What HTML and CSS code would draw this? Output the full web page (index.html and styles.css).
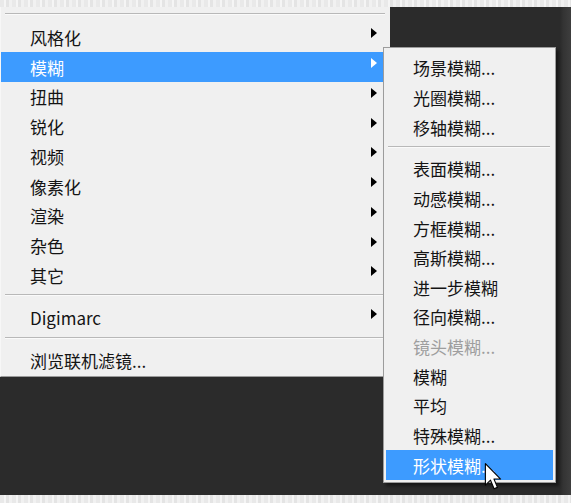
FILE: index.html
```html
<!DOCTYPE html>
<html lang="zh-CN">
<head>
<meta charset="utf-8">
<title>滤镜菜单</title>
<link rel="stylesheet" href="styles.css">
</head>
<body>
<div class="screen">
  <div class="band"></div>
  <div class="workspace">
    <div class="menu-main">
      <div class="sep sep-top"></div>
      <div class="item"><span>风格化</span><i class="arrow"></i></div>
      <div class="item active"><span>模糊</span><i class="arrow"></i></div>
      <div class="item"><span>扭曲</span><i class="arrow"></i></div>
      <div class="item"><span>锐化</span><i class="arrow"></i></div>
      <div class="item"><span>视频</span><i class="arrow"></i></div>
      <div class="item"><span>像素化</span><i class="arrow"></i></div>
      <div class="item"><span>渲染</span><i class="arrow"></i></div>
      <div class="item"><span>杂色</span><i class="arrow"></i></div>
      <div class="item"><span>其它</span><i class="arrow"></i></div>
      <div class="sep sep-a"></div>
      <div class="item"><span>Digimarc</span><i class="arrow"></i></div>
      <div class="sep sep-b"></div>
      <div class="item"><span>浏览联机滤镜...</span></div>
    </div>
    <div class="menu-sub">
      <div class="sitem tall">场景模糊...</div>
      <div class="sitem tall">光圈模糊...</div>
      <div class="sitem tall">移轴模糊...</div>
      <div class="ssep"></div>
      <div class="sitem">表面模糊...</div>
      <div class="sitem">动感模糊...</div>
      <div class="sitem">方框模糊...</div>
      <div class="sitem">高斯模糊...</div>
      <div class="sitem">进一步模糊</div>
      <div class="sitem">径向模糊...</div>
      <div class="sitem disabled">镜头模糊...</div>
      <div class="sitem">模糊</div>
      <div class="sitem">平均</div>
      <div class="sitem">特殊模糊...</div>
      <div class="sitem active">形状模糊...</div>
    </div>
    <svg class="cursor" width="18" height="27" viewBox="0 0 12 19.5">
      <path d="M0.5,0.5 L0.5,16 L4.2,12.4 L6.8,18.6 L9.2,17.6 L6.7,11.6 L11.5,11.6 Z" fill="#ffffff" stroke="#000000" stroke-width="0.8" stroke-linejoin="round"/>
    </svg>
  </div>
  <div class="band"></div>
</div>
</body>
</html>
```

FILE: styles.css
```css
html, body {
  margin: 0;
  padding: 0;
}
body {
  width: 571px;
  height: 503px;
  overflow: hidden;
  background: #ebebeb;
  font-family: "Noto Sans CJK SC", "Microsoft YaHei", sans-serif;
  font-size: 17px;
  color: #141414;
}
.screen {
  display: flex;
  flex-direction: column;
  width: 571px;
  height: 503px;
}
.band {
  height: 7px;
  flex: none;
  background: repeating-linear-gradient(90deg, #e9e9e9 0 4px, #f5f5f5 4px 6px, #e4e4e4 6px 9px, #f1f1f1 9px 12px);
}
.band:last-child {
  height: 8px;
}
.workspace {
  position: relative;
  flex: 1;
  background: linear-gradient(90deg, #2b2b2b 0 560px, #333333 563px, #3e3e3e 571px);
}
.menu-main {
  position: absolute;
  left: 0;
  top: 0;
  width: 390px;
  height: 370px;
  box-sizing: border-box;
  background: #f0f0f0;
  border-left: 1px solid #f7f7f7;
  border-bottom: 1px solid #9a9a9a;
  padding-top: 6px;
}
.sep {
  height: 1px;
  background: #b8b8b8;
  margin-left: 4px;
  margin-right: 5px;
  box-shadow: 0 1px 0 #fafafa;
}
.sep-top { margin-bottom: 8.5px; }
.sep-a { margin-top: 3.5px; margin-bottom: 8.25px; }
.sep-b { margin-top: 4px; margin-bottom: 8px; }
.item {
  position: relative;
  height: 29.75px;
  display: flex;
  align-items: center;
  padding-left: 29px;
  line-height: 1;
}
.item.active {
  background: #3d9bff;
  color: #ffffff;
}
.arrow {
  position: absolute;
  left: 370px;
  top: 50%;
  margin-top: -9px;
  width: 0;
  height: 0;
  border-left: 6px solid #000000;
  border-top: 5px solid transparent;
  border-bottom: 5px solid transparent;
}
.item.active .arrow {
  border-left-color: #ffffff;
}
.menu-sub {
  position: absolute;
  left: 383px;
  top: 40px;
  width: 173px;
  height: 436px;
  box-sizing: border-box;
  background: #f0f0f0;
  border: 1px solid #9c9c9c;
  padding: 4px 2px 0 2px;
  box-shadow: 3px 3px 3px rgba(0, 0, 0, 0.45);
}
.sitem {
  height: 29.64px;
  display: flex;
  align-items: center;
  padding-left: 27px;
  line-height: 1;
}
.sitem.tall { height: 30px; }
.sitem.disabled { color: #9e9e9e; }
.sitem.active {
  background: #3d9bff;
  color: #ffffff;
}
.ssep {
  height: 1px;
  background: #b8b8b8;
  margin: 4px 3px 7px 2px;
  box-shadow: 0 1px 0 #fafafa;
}
.cursor {
  position: absolute;
  left: 484px;
  top: 456px;
}
```
